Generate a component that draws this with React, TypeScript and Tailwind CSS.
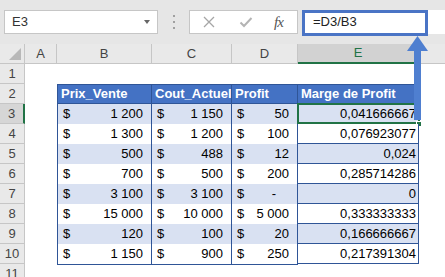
import { Fragment } from "react"

const rows = [
  { b: "1 200", c: "1 150", d: "50", e: "0,041666667" },
  { b: "1 300", c: "1 200", d: "100", e: "0,076923077" },
  { b: "500", c: "488", d: "12", e: "0,024" },
  { b: "700", c: "500", d: "200", e: "0,285714286" },
  { b: "3 100", c: "3 100", d: "-", e: "0" },
  { b: "15 000", c: "10 000", d: "5 000", e: "0,333333333" },
  { b: "120", c: "100", d: "20", e: "0,166666667" },
  { b: "1 150", c: "900", d: "250", e: "0,217391304" },
]

const cols = ["A", "B", "C", "D", "E"]

function Money({ value, first }: { value: string; first?: boolean }) {
  return (
    <div className={`flex items-center justify-between pl-[5px] ${value === "-" ? "pr-[21px]" : "pr-[8px]"} border-r border-b border-[#2f5597] ${first ? "border-l" : ""}`}>
      <span>$</span>
      <span>{value}</span>
    </div>
  )
}

export default function App() {
  return (
    <div className="relative w-[445px] h-[277px] overflow-hidden bg-white font-['Liberation_Sans',sans-serif] text-[13px] text-black">
      {/* formula bar */}
      <div className="h-[44px] bg-[#e6e6e6] flex items-start pt-[10px] pl-[4px]">
        <div className="w-[154px] h-[24px] bg-white border border-[#c6c6c6] flex items-center justify-between pl-[7px] pr-[7px] text-[#333]">
          <span>E3</span>
          <span className="w-0 h-0 border-l-[3.5px] border-r-[3.5px] border-t-[4px] border-l-transparent border-r-transparent border-t-[#666]" />
        </div>
        <div className="w-[31px] h-[24px] flex flex-col items-center justify-center gap-[4px]">
          <span className="w-[2px] h-[2px] bg-[#a0a0a0]" />
          <span className="w-[2px] h-[2px] bg-[#a0a0a0]" />
          <span className="w-[2px] h-[2px] bg-[#a0a0a0]" />
        </div>
        <div className="w-[109px] h-[24px] bg-white border border-[#c6c6c6] flex items-center">
          <svg width="14" height="14" viewBox="0 0 14 14" className="ml-[12px]">
            <path d="M2 2 L12 12 M12 2 L2 12" stroke="#a6a6a6" strokeWidth="1.3" fill="none" />
          </svg>
          <svg width="14" height="14" viewBox="0 0 14 14" className="ml-[23px]">
            <path d="M1.5 7.5 L5 11 L12.5 3" stroke="#b4b4b4" strokeWidth="2" fill="none" />
          </svg>
          <span className="ml-[21px] font-['Liberation_Serif',serif] italic text-[15px] text-[#555] tracking-[-1px]">fx</span>
        </div>
        <div className="flex-1 h-[24px] ml-[4px] bg-white flex items-center pl-[11px] text-[#222]">
          =D3/B3
        </div>
      </div>
      <div className="absolute left-[302px] top-[10px] w-[126px] h-[26px] border-[3px] border-[#4a74c5]" />

      {/* sheet */}
      <div className="grid grid-cols-[25px_32px_95px_80px_66px_121px_26px] auto-rows-[20px]">
        <div className="relative bg-[#e9e9e9] border-r border-b border-[#c6c6c6]">
          <span className="absolute right-[3px] bottom-[3px] w-0 h-0 border-l-[12px] border-t-[12px] border-l-transparent border-t-transparent border-b-0 border-r-0" style={{ borderBottom: "12px solid #b8b8b8", borderLeft: "12px solid transparent", borderTop: 0 }} />
        </div>
        {cols.map((c) =>
          c === "E" ? (
            <div key={c} className="bg-[#d2d2d2] border-r border-[#c6c6c6] border-b-2 border-b-[#217346] flex items-center justify-center text-[#217346]">
              {c}
            </div>
          ) : (
            <div key={c} className="bg-[#e9e9e9] border-r border-b border-[#c6c6c6] flex items-center justify-center text-[#444]">
              {c}
            </div>
          )
        )}
        <div className="bg-[#e9e9e9] border-b border-[#c6c6c6]" />

        {/* row 1 */}
        <div className="bg-[#e9e9e9] border-r border-b border-[#c6c6c6] flex items-center justify-center text-[#444]">1</div>
        <div className="col-span-6" />

        {/* row 2 */}
        <div className="bg-[#e9e9e9] border-r border-b border-[#c6c6c6] flex items-center justify-center text-[#444]">2</div>
        <div />
        {["Prix_Vente", "Cout_Actuel", "Profit", "Marge de Profit"].map((h, i) => (
          <div key={h} className={`bg-[#4472c4] text-white font-bold flex items-center pl-[3px] overflow-hidden whitespace-nowrap border-t border-r border-b border-[#2f5597] ${i === 0 ? "border-l" : ""}`}>
            {h}
          </div>
        ))}
        <div />

        {rows.map((r, i) => {
          const n = i + 3
          const band = i % 2 === 0 ? "bg-[#d9e1f2]" : "bg-white"
          return (
            <Fragment key={n}>
              <div className={`border-b border-[#c6c6c6] flex items-center justify-center text-[#444] ${n === 3 ? "bg-[#d6d6d6] border-r-2 border-r-[#217346]" : "bg-[#e9e9e9] border-r"}`}>
                {n}
              </div>
              <div />
              <div className={`${band} contents`}>
                <div className={band + " grid"}>
                  <Money value={r.b} first />
                </div>
                <div className={band + " grid"}>
                  <Money value={r.c} />
                </div>
                <div className={band + " grid"}>
                  <Money value={r.d} />
                </div>
              </div>
              <div className={`${band} relative flex items-center justify-end pr-[2px] border-r border-b border-[#2f5597]`}>
                {r.e}
                {n === 3 && (
                  <>
                    <span className="absolute left-[-1px] top-[-1px] right-[-2px] bottom-[-1px] border-2 border-[#217346]" />
                    <span className="absolute right-[-4px] bottom-[-4px] w-[6px] h-[6px] bg-[#217346] border border-white" />
                  </>
                )}
              </div>
              <div />
            </Fragment>
          )
        })}

        <div className="bg-[#e9e9e9] border-r border-b border-[#c6c6c6] flex items-center justify-center text-[#444]">11</div>
        <div className="col-span-6" />
      </div>

      {/* arrow */}
      <svg className="absolute left-[407px] top-[36px]" width="21" height="85" viewBox="0 0 21 85">
        <polygon points="10.5,0 21,15 0,15" fill="#4f7fd0" />
        <rect x="7" y="14" width="7" height="70" fill="#4f7fd0" />
      </svg>
    </div>
  )
}
